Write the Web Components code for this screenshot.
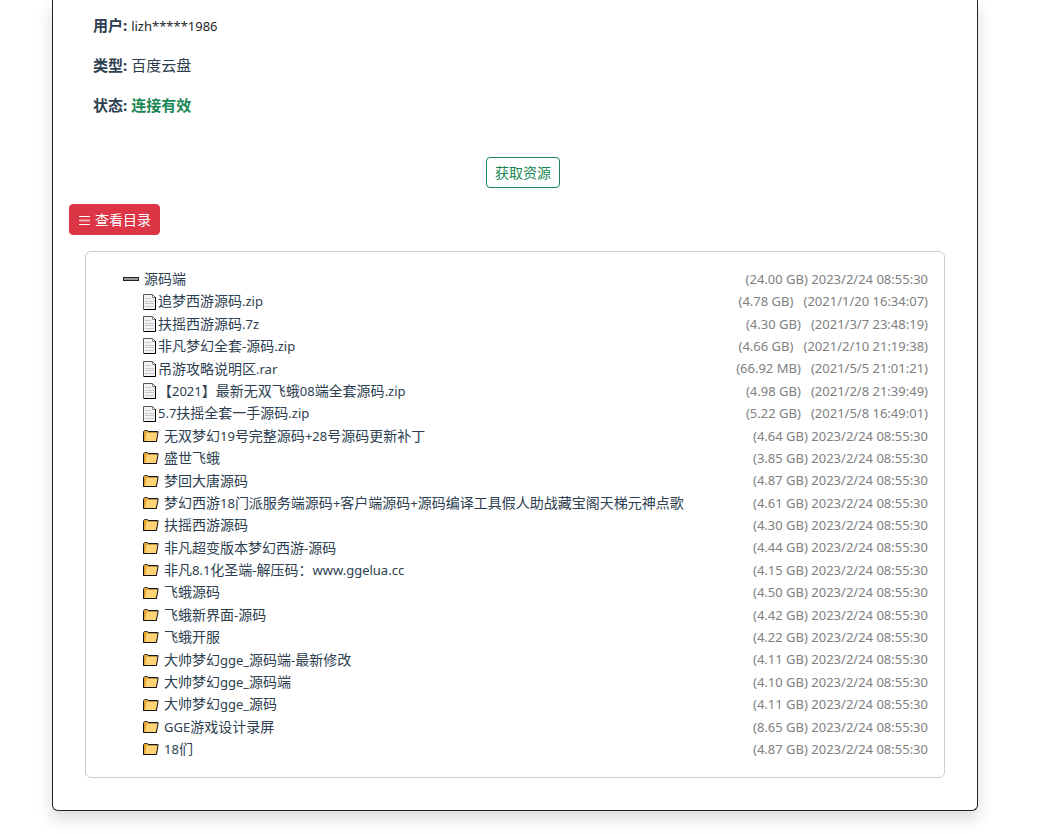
<!DOCTYPE html>
<html lang="zh-CN">
<head>
<meta charset="utf-8">
<title>资源详情</title>
<style>
  html { --latin: 13px; }
  body {
    margin: 0;
    background: #fff;
    color: #2c3e50;
    font: 14px/1.6 "Noto Sans", "Noto Sans CJK SC", sans-serif;
  }
</style>
</head>
<body>
<resource-card>
  <info-line label="用户" kind="account">lizh*****1986</info-line>
  <info-line label="类型">百度云盘</info-line>
  <info-line label="状态" kind="ok">连接有效</info-line>
  <action-button slot="fetch" kind="outline">获取资源</action-button>
  <action-button slot="toggle" kind="danger" icon="list">查看目录</action-button>
  <file-tree slot="tree"></file-tree>
</resource-card>

<script>
class ResourceCard extends HTMLElement {
  constructor() {
    super();
    this.attachShadow({ mode: "open" }).innerHTML = `
      <style>
        :host { display: block; padding: 0 73px 23px 52px; }
        main {
          box-sizing: border-box;
          padding: 13px 16px 32px;
          background: #fff;
          border: 1px solid #212529;
          border-top: 0;
          border-radius: 0 0 6px 6px;
          box-shadow: 0 8px 16px rgba(0, 0, 0, .15);
        }
        .info { display: grid; gap: 16px; padding: 0 24px; }
        .fetch { display: flex; justify-content: center; margin: 40px 0 16px 16px; }
        .toggle { display: flex; margin-bottom: 16px; }
        .tree { margin: 0 16px; }
      </style>
      <main>
        <div class="info"><slot></slot></div>
        <div class="fetch"><slot name="fetch"></slot></div>
        <div class="toggle"><slot name="toggle"></slot></div>
        <div class="tree"><slot name="tree"></slot></div>
      </main>`;
  }
}

class InfoLine extends HTMLElement {
  constructor() {
    super();
    this.attachShadow({ mode: "open" }).innerHTML = `
      <style>
        :host { display: block; font-size: 15px; line-height: 24px; }
        .value { line-height: 1; }
        :host([kind="ok"]) .value { color: #198754; font-weight: 700; }
        :host([kind="account"]) .value { color: #212529; font-size: var(--latin); }
      </style>
      <strong></strong> <span class="value"><slot></slot></span>`;
  }
  connectedCallback() {
    this.shadowRoot.querySelector("strong").textContent = this.getAttribute("label") + ":";
  }
}

class ActionButton extends HTMLElement {
  constructor() {
    super();
    this.attachShadow({ mode: "open" }).innerHTML = `
      <style>
        :host { display: inline-flex; }
        button {
          display: inline-flex; align-items: center; gap: 3px;
          padding: 4px 8px; margin: 0;
          border: 1px solid #198754; border-radius: 4px;
          background: #fff; color: #198754;
          font: inherit; line-height: 21px; cursor: pointer;
        }
        :host([kind="danger"]) button { background: #dc3545; border-color: #dc3545; color: #fff; }
        svg { display: none; }
        :host([icon]) svg { display: block; }
      </style>
      <button type="button">
        <svg width="14" height="14" viewBox="0 0 14 14" aria-hidden="true"><path d="M1 3.5H12M1 11.5H12" stroke="currentColor"/><path d="M1 7.5H12" stroke="currentColor" stroke-width="2" opacity=".6"/></svg>
        <slot></slot>
      </button>`;
  }
}

const ICONS = {
  root: `<svg width="16" height="16" viewBox="0 0 16 16" aria-hidden="true"><rect x=".5" y="6.5" width="15" height="3" fill="#999" stroke="#222"/></svg>`,
  file: `<svg width="14" height="16" viewBox="0 0 14 16" aria-hidden="true"><path d="M.5 .5H9.5L12.5 3.5V15.5H.5Z" fill="#f3f3f3" stroke="#555"/><path d="M12.5 3V15.5H1" fill="none" stroke="#000"/><path d="M9.5 1V3.5H12" fill="#fff" stroke="#888"/><path d="M2 4.5H8M2 7.5H11M2 9.5H11M2 12.5H11" stroke="#c8c8c8"/></svg>`,
  folder: `<svg width="16" height="14" viewBox="0 0 16 14" aria-hidden="true"><path d="M.5 12.5V2.5L1.5 1.5H4.5L5.5 2.5H13.5V12.5Z" fill="#e0a030" stroke="#2b3b40"/><path d="M3.5 3.5H14.8L13.3 12.5H2Z" fill="#ffd475"/><path d="M5 2.7H15.2L13.4 12.5H.5V4" fill="none" stroke="#111"/></svg>`
};

class TreeRow extends HTMLElement {
  constructor() {
    super();
    this.attachShadow({ mode: "open" }).innerHTML = `
      <style>
        :host { display: flex; align-items: center; white-space: pre; }
        .icon { display: flex; flex: none; margin-right: 5px; }
        :host([kind="file"]) .icon { margin-right: 1px; }
        .name { flex: 1; min-width: 0; overflow: hidden; }
        .latin, .meta { font-size: var(--latin); }
        .meta { flex: none; color: #808080; }
      </style>
      <span class="icon"></span><span class="name"></span><span class="meta"></span>`;
  }
  connectedCallback() {
    const part = (name) => this.shadowRoot.querySelector("." + name);
    part("icon").innerHTML = ICONS[this.getAttribute("kind")];
    part("name").innerHTML = this.getAttribute("name").replace(/[\x20-\x7e]+/g, '<span class="latin">$&</span>');
    part("meta").textContent = this.getAttribute("meta");
  }
}

const FILES = [
  ["追梦西游源码.zip", "4.78 GB", "2021/1/20 16:34:07"],
  ["扶摇西游源码.7z", "4.30 GB", "2021/3/7 23:48:19"],
  ["非凡梦幻全套-源码.zip", "4.66 GB", "2021/2/10 21:19:38"],
  ["吊游攻略说明区.rar", "66.92 MB", "2021/5/5 21:01:21"],
  ["【2021】最新无双飞蛾08端全套源码.zip", "4.98 GB", "2021/2/8 21:39:49"],
  ["5.7扶摇全套一手源码.zip", "5.22 GB", "2021/5/8 16:49:01"]
];
const FOLDERS = [
  ["无双梦幻19号完整源码+28号源码更新补丁", "4.64 GB"],
  ["盛世飞蛾", "3.85 GB"],
  ["梦回大唐源码", "4.87 GB"],
  ["梦幻西游18门派服务端源码+客户端源码+源码编译工具假人助战藏宝阁天梯元神点歌", "4.61 GB"],
  ["扶摇西游源码", "4.30 GB"],
  ["非凡超变版本梦幻西游-源码", "4.44 GB"],
  ["非凡8.1化圣端-解压码：www.ggelua.cc", "4.15 GB"],
  ["飞蛾源码", "4.50 GB"],
  ["飞蛾新界面-源码", "4.42 GB"],
  ["飞蛾开服", "4.22 GB"],
  ["大帅梦幻gge_源码端-最新修改", "4.11 GB"],
  ["大帅梦幻gge_源码端", "4.10 GB"],
  ["大帅梦幻gge_源码", "4.11 GB"],
  ["GGE游戏设计录屏", "8.65 GB"],
  ["18们", "4.87 GB"]
];
const SYNCED = "2023/2/24 08:55:30";

class FileTree extends HTMLElement {
  constructor() {
    super();
    const row = (kind, name, meta) => `<tree-row kind="${kind}" name="${name}" meta="${meta}"></tree-row>`;
    const files = FILES.map(([n, s, d]) => `<li>${row("file", n, `(${s})   (${d})`)}</li>`);
    const folders = FOLDERS.map(([n, s]) => `<li>${row("folder", n, `(${s}) ${SYNCED}`)}</li>`);
    this.attachShadow({ mode: "open" }).innerHTML = `
      <style>
        :host { display: block; padding: 16px 16px 16px 37px; border: 1px solid #ccc; border-radius: 6px; }
        ul { margin: 0; padding: 0; list-style: none; }
        ul ul { padding-left: 20px; }
      </style>
      <ul><li>${row("root", "源码端", `(24.00 GB) ${SYNCED}`)}
        <ul>${files.join("")}${folders.join("")}</ul></li></ul>`;
  }
}

customElements.define("tree-row", TreeRow);
customElements.define("file-tree", FileTree);
customElements.define("action-button", ActionButton);
customElements.define("info-line", InfoLine);
customElements.define("resource-card", ResourceCard);
</script>
</body>
</html>
